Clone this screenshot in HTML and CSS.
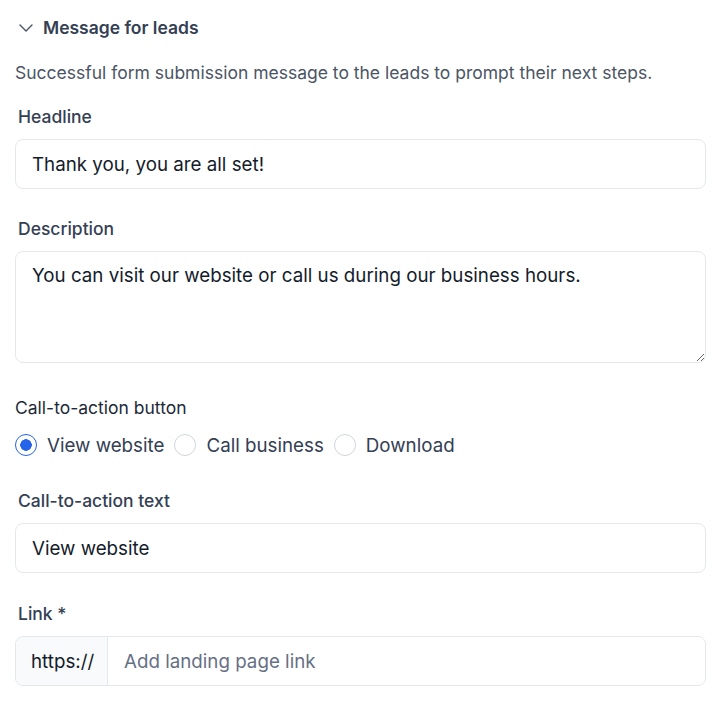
FILE: index.html
```html
<!DOCTYPE html>
<html lang="en">
<head>
    <meta charset="UTF-8">
    <meta name="viewport" content="width=device-width, initial-scale=1.0">
    <title>Message for leads</title>
    <link rel="stylesheet" href="styles.css">
</head>
<body>
    <div class="panel">
        <div class="section-head">
            <svg class="chevron" width="14" height="8" viewBox="0 0 14 8" fill="none">
                <path d="M1 1l6 6 6-6" stroke="#475467" stroke-width="1.4" stroke-linecap="round" stroke-linejoin="round"/>
            </svg>
            <span>Message for leads</span>
        </div>
        <p class="section-desc">Successful form submission message to the leads to prompt their next steps.</p>

        <div class="field first">
            <label class="label" for="headline">Headline</label>
            <input class="input" id="headline" type="text" value="Thank you, you are all set!">
        </div>

        <div class="field tight">
            <label class="label" for="description">Description</label>
            <textarea class="input textarea" id="description">You can visit our website or call us during our business hours.</textarea>
        </div>

        <div class="field cta">
            <div class="label plain">Call-to-action button</div>
            <div class="radios">
                <label class="radio"><input type="radio" name="cta" checked> View website</label>
                <label class="radio"><input type="radio" name="cta"> Call business</label>
                <label class="radio"><input type="radio" name="cta"> Download</label>
            </div>
        </div>

        <div class="field loose">
            <label class="label" for="cta-text">Call-to-action text</label>
            <input class="input" id="cta-text" type="text" value="View website">
        </div>

        <div class="field">
            <label class="label" for="link">Link *</label>
            <div class="input-group">
                <span class="prefix">https://</span>
                <input class="input bare" id="link" type="text" placeholder="Add landing page link">
            </div>
        </div>
    </div>
</body>
</html>
```

FILE: styles.css
```css
body {
    margin: 0;
    font-family: Inter, "Noto Sans", sans-serif;
    color: #344054;
    background: #fff;
}
.panel {
    padding: 15px 16px 20px 15px;
}
.section-head {
    display: flex;
    align-items: center;
    gap: 10px;
    height: 24px;
    padding-left: 4px;
    font-size: 17.5px;
    font-weight: 600;
    color: #344054;
}
.chevron {
    margin-top: 1px;
}
.section-desc {
    margin: 22px 0 0;
    font-size: 17.5px;
    line-height: 24px;
    color: #4b5565;
}
.field {
    display: flex;
    flex-direction: column;
    margin-top: 29px;
}
.field.first {
    margin-top: 20px;
}
.field.tight {
    margin-top: 28px;
}
.field.cta {
    margin-top: 33px;
}
.field.loose {
    margin-top: 30px;
}
.label {
    font-size: 17.5px;
    line-height: 24px;
    font-weight: 500;
    padding-left: 3px;
    margin-bottom: 10px;
    color: #344054;
}
.label.plain {
    font-weight: 400;
    padding-left: 0;
    margin-bottom: 11px;
    color: #1d2939;
}
.input {
    box-sizing: border-box;
    width: 100%;
    height: 50px;
    padding: 0 16px;
    border: 1px solid #e4e7ec;
    border-radius: 8px;
    font-family: inherit;
    font-size: 18.75px;
    color: #141c2b;
    background: #fff;
    outline: none;
}
.input::placeholder {
    color: #667085;
}
.textarea {
    height: 112px;
    padding: 10px 16px;
    line-height: 28px;
    resize: vertical;
}
.radios {
    display: flex;
    align-items: center;
    gap: 10px;
    height: 28px;
}
.radio {
    display: flex;
    align-items: center;
    gap: 10px;
    font-size: 18.75px;
    color: #344054;
}
.radio input {
    appearance: none;
    box-sizing: border-box;
    width: 22px;
    height: 22px;
    margin: 0;
    border: 1px solid #d0d5dd;
    border-radius: 50%;
    background: #fff;
}
.radio input:checked {
    border-color: #2563eb;
    background: radial-gradient(circle, #2563eb 0 5.5px, #fff 6px);
}
.input-group {
    display: flex;
    height: 50px;
    border: 1px solid #e4e7ec;
    border-radius: 8px;
    box-sizing: border-box;
    overflow: hidden;
}
.prefix {
    display: flex;
    align-items: center;
    padding: 0 15px;
    width: 92px;
    flex-shrink: 0;
    box-sizing: border-box;
    background: #f9fafb;
    border-right: 1px solid #e4e7ec;
    font-size: 18.75px;
    color: #141c2b;
}
.input.bare {
    height: 48px;
    border: none;
    border-radius: 0;
}
```
